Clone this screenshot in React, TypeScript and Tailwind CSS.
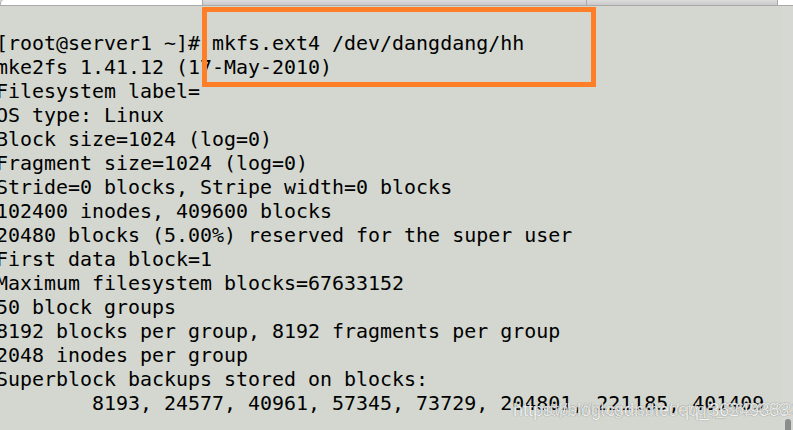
const lines = [
  "[root@server1 ~]# mkfs.ext4 /dev/dangdang/hh",
  "mke2fs 1.41.12 (17-May-2010)",
  "Filesystem label=",
  "OS type: Linux",
  "Block size=1024 (log=0)",
  "Fragment size=1024 (log=0)",
  "Stride=0 blocks, Stripe width=0 blocks",
  "102400 inodes, 409600 blocks",
  "20480 blocks (5.00%) reserved for the super user",
  "First data block=1",
  "Maximum filesystem blocks=67633152",
  "50 block groups",
  "8192 blocks per group, 8192 fragments per group",
  "2048 inodes per group",
  "Superblock backups stored on blocks:",
  "        8193, 24577, 40961, 57345, 73729, 204801, 221185, 401409",
];

export default function App() {
  return (
    <div className="relative w-[793px] h-[430px] overflow-hidden bg-[#d3d7cf] flex flex-col">
      {/* tab strip */}
      <div className="flex h-[6px] border-b border-[#a9a9a9] shrink-0">
        <div className="w-[202px] bg-white rounded-tl-sm border-l border-[#b0b0b0]" />
        <div className="w-[384px] bg-gradient-to-b from-[#dcdcdc] to-[#c9c9c9] border-l border-[#a9a9a9]" />
        <div className="w-[192px] bg-gradient-to-b from-[#dcdcdc] to-[#c9c9c9] border-l border-r border-[#a9a9a9]" />
        <div className="flex-1 bg-white" />
      </div>

      <div className="flex flex-1 min-h-0">
        <div className="flex-1 pt-[25px] -ml-1 font-['DejaVu_Sans_Mono',monospace] text-[19.95px] leading-[24px] text-black whitespace-pre">
          {lines.map((l, i) => (
            <div key={i}>{l}</div>
          ))}
        </div>
        {/* scrollbar */}
        <div className="w-[11px] bg-[#d6d8d3] flex flex-col justify-end items-center">
          <div className="w-[6px] h-[11px] rounded-t-[3px] bg-[#8c8c8c]" />
        </div>
      </div>

      {/* highlight box */}
      <div className="absolute left-[202px] top-[7px] w-[394px] h-[80px] border-[5px] border-[#fe7f27]" />

      {/* watermark */}
      <div className="absolute left-[513px] top-[400px] font-['Liberation_Sans',Arial,sans-serif] text-[18px] leading-[20px] text-white/90 [text-shadow:0_0_1px_rgba(60,60,60,0.7)] whitespace-nowrap">
        https://blog.csdn.net/qq_36249383
      </div>
      <div className="absolute left-[540px] top-[400px] font-['Liberation_Sans',Arial,sans-serif] text-[17px] leading-[20px] text-white/75 [text-shadow:0_0_1px_rgba(60,60,60,0.6)] whitespace-nowrap">
        https://blog.csdn.net/qq_36249323
      </div>
    </div>
  );
}
